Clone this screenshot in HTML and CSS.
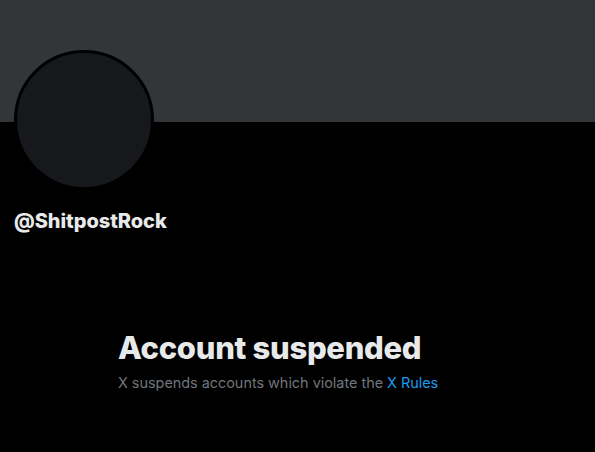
FILE: index.html
```html
<!DOCTYPE html>
<html>
<head>
<meta charset="utf-8">
<link rel="stylesheet" href="styles.css">
</head>
<body>
<div class="banner"></div>
<div class="profile">
  <div class="avatar"></div>
  <div class="handle">@ShitpostRock</div>
</div>
<div class="message">
  <div class="title">Account suspended</div>
  <div class="sub">X suspends accounts which violate the <a class="link" href="#">X Rules</a></div>
</div>
</body>
</html>
```
FILE: styles.css
```css
html, body {
  margin: 0;
  padding: 0;
  background: #000;
  height: 100%;
  overflow: hidden;
  font-family: Inter, "Noto Sans", sans-serif;
}
.banner {
  height: 122px;
  background: #333639;
}
.profile {
  padding-left: 14px;
}
.avatar {
  width: 134px;
  height: 134px;
  margin-top: -72px;
  border: 3px solid #000;
  border-radius: 50%;
  background: #16181c;
}
.handle {
  margin-top: 19px;
  color: #e7e9ea;
  font-weight: 800;
  font-size: 20px;
  line-height: 24px;
  letter-spacing: -0.05px;
}
.message {
  padding-left: 118px;
  margin-top: 97px;
}
.title {
  color: #e7e9ea;
  font-weight: 800;
  font-size: 31px;
  line-height: 36px;
  letter-spacing: -0.3px;
}
.sub {
  margin-top: 7px;
  color: #71767b;
  font-size: 14.4px;
  line-height: 20px;
}
.link {
  color: #1d9bf0;
  text-decoration: none;
}
```
